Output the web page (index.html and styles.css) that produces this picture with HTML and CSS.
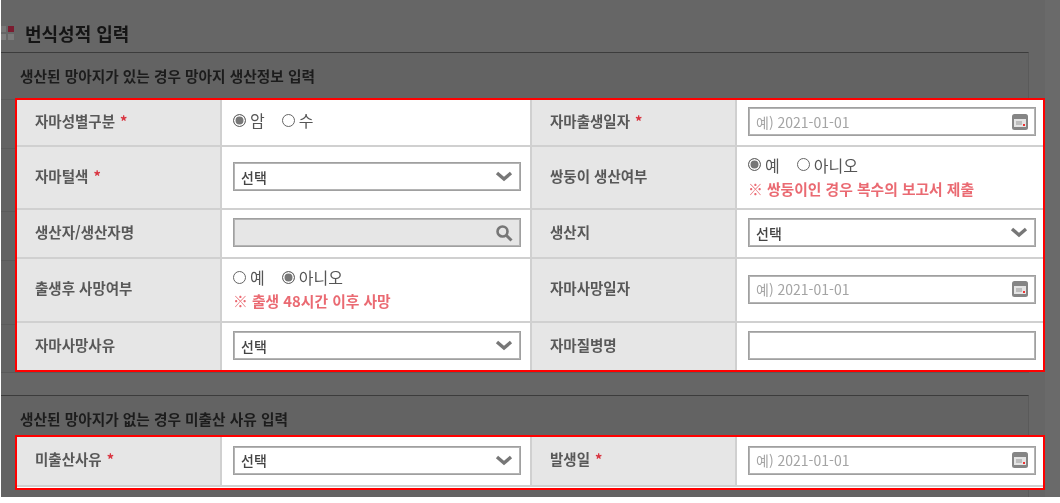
FILE: index.html
```html
<!DOCTYPE html>
<html lang="ko">
<head>
    <meta charset="UTF-8">
    <title>번식성적 입력</title>
    <link rel="stylesheet" href="styles.css">
</head>
<body>
    <svg class="icon-defs" width="0" height="0">
        <symbol id="chevron" viewBox="0 0 18 11">
            <path d="M2 2l7 6 7-6" fill="none" stroke="#777" stroke-width="3.4"/>
        </symbol>
        <symbol id="search" viewBox="0 0 18 18">
            <circle cx="7.5" cy="7.5" r="5" fill="none" stroke="#777" stroke-width="2.6"/>
            <path d="M11.5 11.5l5 5" stroke="#777" stroke-width="3"/>
        </symbol>
        <symbol id="calendar" viewBox="0 0 16 16">
            <rect width="16" height="16" rx="2.5" fill="#858585"/>
            <rect x="2" y="5" width="12" height="8" fill="#e4e4e4"/>
            <rect x="4" y="7" width="6" height="4" fill="#bdbdbd"/>
            <rect x="11" y="10" width="2" height="2" fill="#e33"/>
        </symbol>
    </svg>

    <div class="page">
        <header class="page-title">
            <svg class="title-mark" width="14" height="14" viewBox="0 0 14 14">
                <rect x="0" y="0" width="6" height="6" fill="#777"/>
                <rect x="8" y="0" width="6" height="6" fill="#7b1c30"/>
                <rect x="0" y="8" width="6" height="6" fill="#7d7d7d"/>
                <rect x="8" y="8" width="6" height="6" fill="#7a7a7a"/>
            </svg>
            <h1>번식성적 입력</h1>
        </header>

        <section class="panel panel-born">
            <h2>생산된 망아지가 있는 경우 망아지 생산정보 입력</h2>
            <div class="highlight">
                <table class="form-table">
                    <colgroup>
                        <col class="col-th1"><col class="col-td1"><col class="col-th2"><col class="col-td2">
                    </colgroup>
                    <tr class="row-a">
                        <th>자마성별구분<span class="req">*</span></th>
                        <td>
                            <div class="radios">
                                <label><span class="radio on"></span>암</label>
                                <label><span class="radio"></span>수</label>
                            </div>
                        </td>
                        <th>자마출생일자<span class="req">*</span></th>
                        <td>
                            <div class="field"><span class="hint">예) 2021-01-01</span><svg class="ico-cal"><use href="#calendar"/></svg></div>
                        </td>
                    </tr>
                    <tr class="row-b">
                        <th>자마털색<span class="req">*</span></th>
                        <td>
                            <div class="field"><span>선택</span><svg class="ico-chev"><use href="#chevron"/></svg></div>
                        </td>
                        <th>쌍둥이 생산여부</th>
                        <td>
                            <div class="radios">
                                <label><span class="radio on"></span>예</label>
                                <label><span class="radio"></span>아니오</label>
                            </div>
                            <p class="note">※ 쌍둥이인 경우 복수의 보고서 제출</p>
                        </td>
                    </tr>
                    <tr class="row-c">
                        <th>생산자/생산자명</th>
                        <td>
                            <div class="field disabled"><span></span><svg class="ico-search"><use href="#search"/></svg></div>
                        </td>
                        <th>생산지</th>
                        <td>
                            <div class="field"><span>선택</span><svg class="ico-chev"><use href="#chevron"/></svg></div>
                        </td>
                    </tr>
                    <tr class="row-d">
                        <th>출생후 사망여부</th>
                        <td>
                            <div class="radios">
                                <label><span class="radio"></span>예</label>
                                <label><span class="radio on"></span>아니오</label>
                            </div>
                            <p class="note">※ 출생 48시간 이후 사망</p>
                        </td>
                        <th>자마사망일자</th>
                        <td>
                            <div class="field"><span class="hint">예) 2021-01-01</span><svg class="ico-cal"><use href="#calendar"/></svg></div>
                        </td>
                    </tr>
                    <tr class="row-e">
                        <th>자마사망사유</th>
                        <td>
                            <div class="field"><span>선택</span><svg class="ico-chev"><use href="#chevron"/></svg></div>
                        </td>
                        <th>자마질병명</th>
                        <td>
                            <div class="field"></div>
                        </td>
                    </tr>
                </table>
            </div>
        </section>

        <section class="panel panel-unborn">
            <h2>생산된 망아지가 없는 경우 미출산 사유 입력</h2>
            <div class="highlight highlight-last">
                <table class="form-table">
                    <colgroup>
                        <col class="col-th1"><col class="col-td1"><col class="col-th2"><col class="col-td2">
                    </colgroup>
                    <tr class="row-f">
                        <th>미출산사유<span class="req">*</span></th>
                        <td>
                            <div class="field"><span>선택</span><svg class="ico-chev"><use href="#chevron"/></svg></div>
                        </td>
                        <th>발생일<span class="req">*</span></th>
                        <td>
                            <div class="field"><span class="hint">예) 2021-01-01</span><svg class="ico-cal"><use href="#calendar"/></svg></div>
                        </td>
                    </tr>
                </table>
            </div>
        </section>
    </div>
</body>
</html>
```

FILE: styles.css
```css
* {
    box-sizing: border-box;
}

body {
    margin: 0;
    background: #fff;
    font-family: "Noto Sans CJK KR", "Noto Sans", sans-serif;
    color: #555;
    overflow: hidden;
}

.icon-defs {
    position: absolute;
}

.page {
    height: 497px;
    margin-left: 1px;
    background: linear-gradient(to right, #666 1044px, #6a6a6a 1044px);
    filter: blur(0.35px);
}

.page-title {
    display: flex;
    align-items: center;
    height: 52px;
    padding-top: 13px;
    overflow: hidden;
}

.title-mark {
    flex: none;
    margin-left: -1px;
    margin-right: 11px;
}

.page-title h1 {
    margin: 0;
    font-size: 18px;
    font-weight: 700;
    color: #151515;
}

.panel {
    width: 1028px;
    border-top: 1px solid #3c3c3c;
    border-right: 1px solid #5a5a5a;
    background-color: #636363;
}

.panel h2 {
    margin: 0;
    padding-left: 19px;
    font-size: 14.7px;
    font-weight: 700;
    color: #1c1c1c;
}

.panel-born {
    height: 321px;
    margin-bottom: 22px;
    border-bottom: 1px solid #5a5a5a;
    /* row lines of the table under the dim layer, seen left of the red box */
    background-image:
        linear-gradient(#5b5b5b, #5b5b5b),
        linear-gradient(#5b5b5b, #5b5b5b),
        linear-gradient(#5b5b5b, #5b5b5b),
        linear-gradient(#5b5b5b, #5b5b5b),
        linear-gradient(#5b5b5b, #5b5b5b);
    background-size: 14px 1px;
    background-repeat: no-repeat;
    background-position: 0 46px, 0 95px, 0 158px, 0 207px, 0 271px;
}

.panel-born h2 {
    height: 45px;
    line-height: 45px;
}

.panel-unborn {
    height: 102px;
}

.panel-unborn h2 {
    height: 39px;
    line-height: 45px;
}

.highlight {
    width: 1030px;
    margin-left: 14px;
    border: 2px solid #f00;
    background: #fff;
}

.highlight-last {
    padding-bottom: 1px;
}

.form-table {
    width: 100%;
    border-collapse: collapse;
    table-layout: fixed;
    font-size: 14.5px;
}

.col-th1 { width: 204px; }
.col-td1 { width: 310px; }
.col-th2 { width: 205px; }

.form-table th {
    padding: 0 0 5px 18px;
    background: #e6e6e6;
    border-right: 2px solid #d0d0d0;
    border-left: 2px solid #d0d0d0;
    font-weight: 700;
    text-align: left;
    color: #585858;
}

.form-table th:first-child {
    border-left: 0;
}

.form-table td {
    padding: 0 6px 2px 11px;
}

.form-table tr {
    border-bottom: 2px solid #d0d0d0;
}

.form-table tr.row-e {
    border-bottom: 0;
}

.row-a { height: 46px; }
.row-b { height: 63px; }
.row-c { height: 49px; }
.row-d { height: 64px; }
.row-e { height: 48px; }
.row-f { height: 49px; }

.row-a .radios {
    margin-bottom: 3px;
}

.req {
    margin-left: 5px;
    color: #d9333f;
}

.field {
    display: flex;
    align-items: center;
    justify-content: space-between;
    width: 288px;
    height: 29px;
    padding: 0 7px;
    border: 1px solid #a0a0a0;
    outline: 1px solid #b4b4b4;
    outline-offset: -2px;
    background: #fff;
    font-size: 14px;
    font-weight: 500;
    color: #444;
}

.field.disabled {
    background: #e6e6e6;
}

.hint {
    font-size: 14px;
    font-weight: 400;
    color: #a4a4a4;
}

.ico-chev {
    width: 18px;
    height: 11px;
}

.ico-search {
    width: 18px;
    height: 18px;
}

.ico-cal {
    width: 16px;
    height: 16px;
}

.radios {
    display: flex;
    gap: 17px;
    font-size: 16px;
    line-height: 20px;
    color: #555;
}

.radios label {
    display: flex;
    align-items: center;
    gap: 4px;
}

.radio {
    width: 13px;
    height: 13px;
    border: 1.5px solid #666;
    border-radius: 50%;
    background: #fff;
}

.radio.on {
    background: #777;
    box-shadow: inset 0 0 0 1.5px #fff;
}

.note {
    margin: 4px 0 0;
    font-size: 14.8px;
    font-weight: 700;
    line-height: 20px;
    color: #ea6a72;
}
```
